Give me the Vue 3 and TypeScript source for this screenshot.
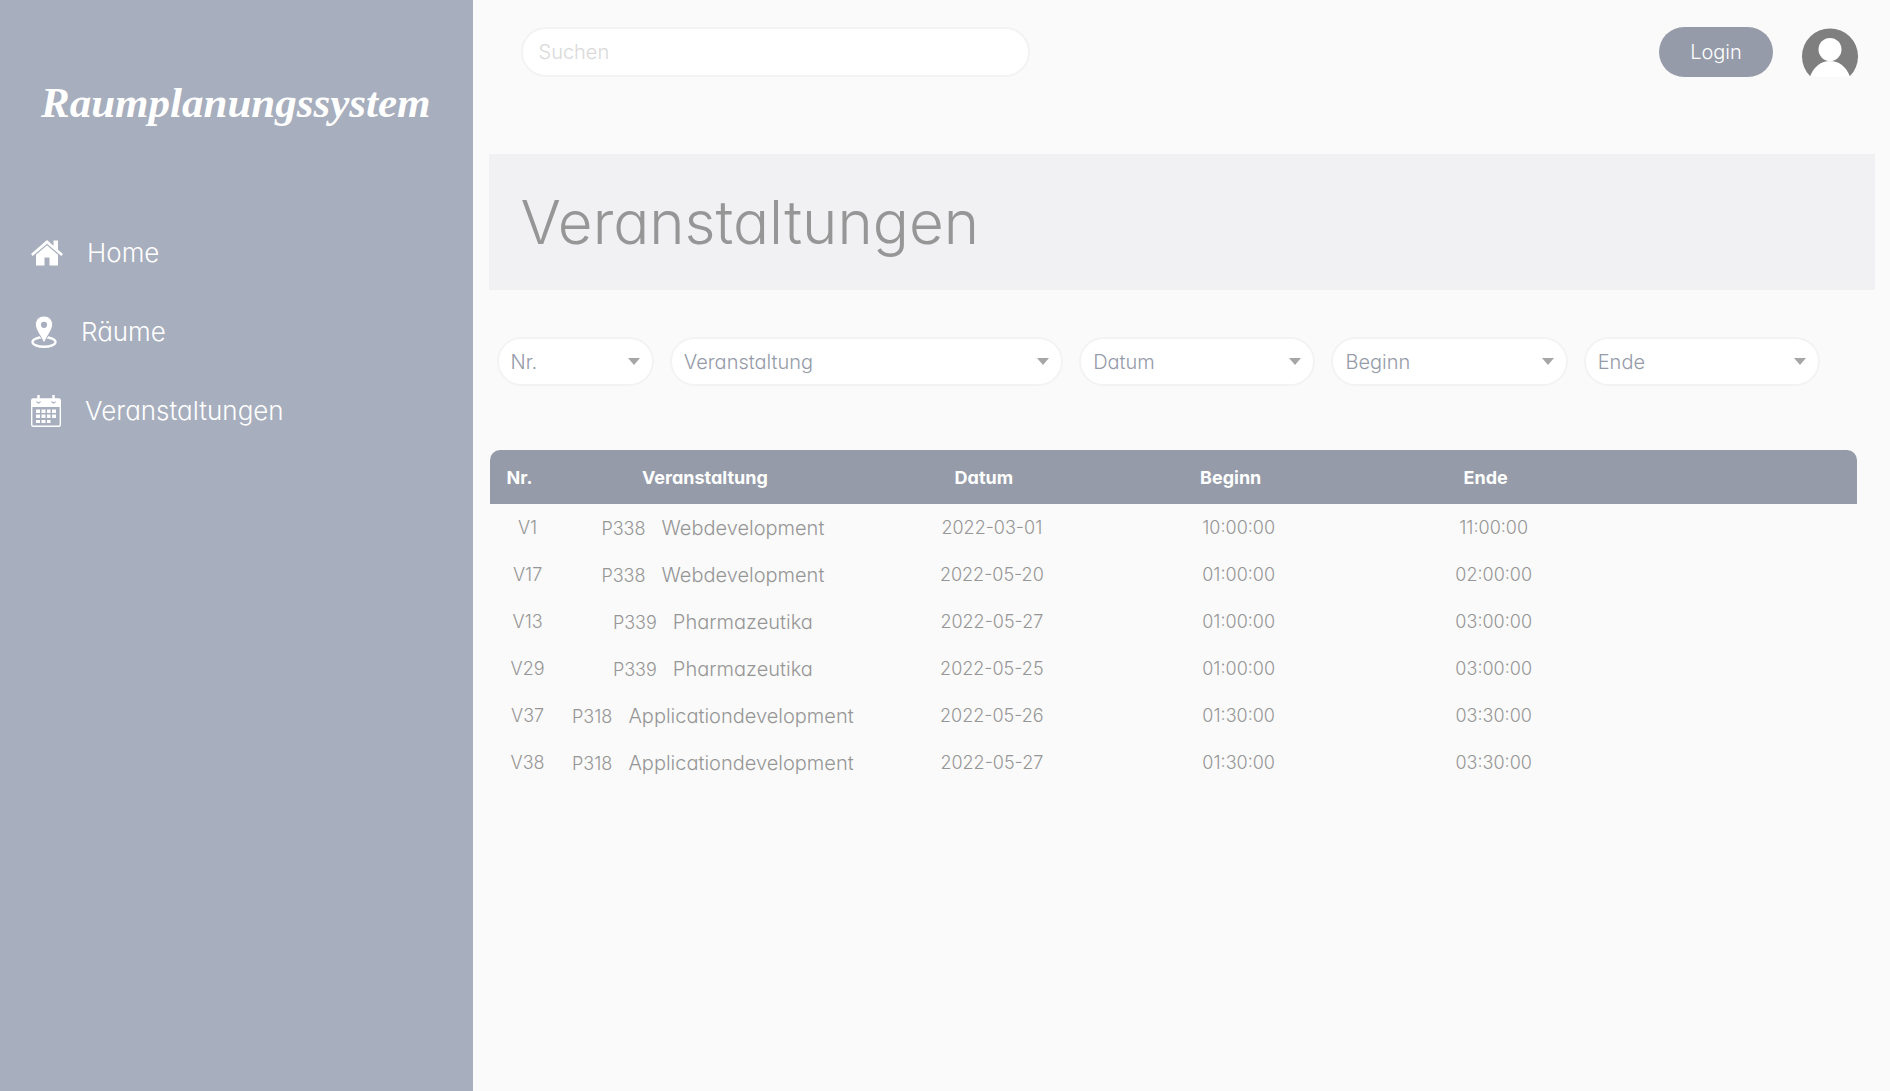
<script setup lang="ts">
import { ref } from 'vue'

interface Filter {
  id: string
  label: string
  share: number
}

interface Booking {
  nr: string
  room: string
  title: string
  date: string
  start: string
  end: string
}

const search = ref('')

const filters: Filter[] = [
  { id: 'nr', label: 'Nr.', share: 157 },
  { id: 'veranstaltung', label: 'Veranstaltung', share: 393 },
  { id: 'datum', label: 'Datum', share: 236 },
  { id: 'beginn', label: 'Beginn', share: 236 },
  { id: 'ende', label: 'Ende', share: 236 },
]

const bookings: Booking[] = [
  { nr: 'V1', room: 'P338', title: 'Webdevelopment', date: '2022-03-01', start: '10:00:00', end: '11:00:00' },
  { nr: 'V17', room: 'P338', title: 'Webdevelopment', date: '2022-05-20', start: '01:00:00', end: '02:00:00' },
  { nr: 'V13', room: 'P339', title: 'Pharmazeutika', date: '2022-05-27', start: '01:00:00', end: '03:00:00' },
  { nr: 'V29', room: 'P339', title: 'Pharmazeutika', date: '2022-05-25', start: '01:00:00', end: '03:00:00' },
  { nr: 'V37', room: 'P318', title: 'Applicationdevelopment', date: '2022-05-26', start: '01:30:00', end: '03:30:00' },
  { nr: 'V38', room: 'P318', title: 'Applicationdevelopment', date: '2022-05-27', start: '01:30:00', end: '03:30:00' },
]
</script>

<template>
  <div class="app">
    <aside class="sidebar">
      <div class="brand">Raumplanungssystem</div>
      <nav class="nav">
        <a href="#home" class="nav-link">
          <svg width="32" height="32" viewBox="0 0 32 32" aria-hidden="true">
            <path d="M16 3 22.500 8.700V3.500H27V12.700L32 17 30.300 19 16 6.700 1.700 19 0 17Z" fill="#fff" />
            <path d="M16 8.300 27 17.700V28.500H18.500V20.500H13.500V28.500H5V17.700Z" fill="#fff" />
          </svg>
          <span>Home</span>
        </a>
        <a href="#raeume" class="nav-link">
          <svg width="26" height="32" viewBox="0 0 26 32" aria-hidden="true">
            <ellipse cx="13" cy="26" rx="11.500" ry="4.800" fill="none" stroke="#fff" stroke-width="2.400" />
            <path d="M13 0C7.800 0 4.400 3.800 4.400 8.600 4.400 14 10 20 13 27.500 16 20 21.600 14 21.600 8.600 21.600 3.800 18.200 0 13 0Z" fill="#fff" stroke="#a7aebd" stroke-width="1" />
            <circle cx="13" cy="8.800" r="3.100" fill="#a7aebd" />
          </svg>
          <span>Räume</span>
        </a>
        <a href="#veranstaltungen" class="nav-link">
          <svg width="30" height="32" viewBox="0 0 30 32" aria-hidden="true">
            <rect x="0.700" y="4" width="28.600" height="27.300" rx="1.500" fill="none" stroke="#fff" stroke-width="1.400" />
            <path d="M1 4H29V12H1Z" fill="#fff" />
            <path d="M5.500 6.500Q7.500 9.500 9.500 6.500M20.500 6.500Q22.500 9.500 24.500 6.500" fill="none" stroke="#a7aebd" stroke-width="1.300" />
            <path d="M7.500 0V6M22.500 0V6" stroke="#fff" stroke-width="2.400" />
            <path d="M5 14.500h4v3.500H5zM10.500 14.500h4v3.500h-4zM16 14.500h3.500v3.500H16zM21 14.500h4v3.500h-4zM5 19.500h4v3.500H5zM10.500 19.500h4v3.500h-4zM16 19.500h3.500v3.500H16zM21 19.500h4v3.500h-4zM5 25h4v3H5zM10.500 25h4v3h-4zM16 25h3.500v3H16z" fill="#fff" />
          </svg>
          <span>Veranstaltungen</span>
        </a>
      </nav>
    </aside>

    <main class="main">
      <header class="topbar">
        <input v-model="search" class="search" type="search" placeholder="Suchen" aria-label="Suchen" />
        <div class="account">
          <button type="button" class="login">Login</button>
          <svg class="avatar" width="56" height="56" viewBox="0 0 56 56" role="img" aria-label="Profil">
            <path d="M8 48A28 28 0 1 1 48 48Z" fill="#7f7f7f" />
            <circle cx="28" cy="21.500" r="11.500" fill="#fff" />
            <path d="M8 48.500C12 38.500 19 33 28 33S44 38.500 48 48.500Z" fill="#fff" />
          </svg>
        </div>
      </header>

      <section class="banner">
        <h1>Veranstaltungen</h1>
      </section>

      <form class="filters" @submit.prevent>
        <div v-for="f in filters" :key="f.id" class="filter" :style="{ flexGrow: f.share }">
          <select :id="f.id" :aria-label="f.label">
            <option>{{ f.label }}</option>
          </select>
          <svg class="caret" width="12" height="7" viewBox="0 0 12 7" aria-hidden="true">
            <path d="M0 0H12L6 7Z" fill="#a6a6a6" />
          </svg>
        </div>
      </form>

      <table class="bookings">
        <colgroup>
          <col class="c-nr" />
          <col class="c-title" />
          <col class="c-date" />
          <col class="c-start" />
          <col class="c-end" />
          <col />
        </colgroup>
        <thead>
          <tr>
            <th scope="col">Nr.</th>
            <th scope="col">Veranstaltung</th>
            <th scope="col">Datum</th>
            <th scope="col">Beginn</th>
            <th scope="col">Ende</th>
            <td></td>
          </tr>
        </thead>
        <tbody>
          <tr v-for="b in bookings" :key="b.nr">
            <td>{{ b.nr }}</td>
            <td><span class="room">{{ b.room }}</span><span class="title">{{ b.title }}</span></td>
            <td>{{ b.date }}</td>
            <td>{{ b.start }}</td>
            <td>{{ b.end }}</td>
            <td></td>
          </tr>
        </tbody>
      </table>
    </main>
  </div>
</template>

<style>
body {
  margin: 0;
  background: #fafafa;
}
</style>

<style scoped>
.app {
  display: flex;
  min-height: 100vh;
  font-family: 'Century Gothic', Inter, 'Liberation Sans', sans-serif;
  font-feature-settings: 'cv11';
  font-size: 20px;
  font-weight: 300;
  color: #969696;
  background: #fafafa;
}

.app * {
  box-sizing: border-box;
}

.sidebar {
  flex: 0 0 25%;
  min-width: 0;
  background: #a7aebd;
  color: #fff;
}

.brand {
  padding: 73px 0 0 41px;
  font-family: 'Brush Script MT', 'Liberation Serif', cursive;
  font-size: 43px;
  font-style: italic;
  font-weight: 700;
  line-height: 60px;
  white-space: nowrap;
}

.nav {
  display: flex;
  flex-direction: column;
  padding: 80px 0 0 31px;
}

.nav-link {
  display: flex;
  align-items: center;
  gap: 24px;
  height: 79px;
  color: #fff;
  font-size: 26px;
  text-decoration: none;
}

.main {
  flex: 1;
  min-width: 0;
}

.topbar {
  display: flex;
  align-items: flex-start;
  justify-content: space-between;
  padding: 27px 32px 0 48px;
}

.search {
  width: 509px;
  height: 50px;
  padding: 0 16px;
  border: 2px solid #f3f3f3;
  border-radius: 25px;
  background: #fff;
  color: #969696;
  font: inherit;
  font-feature-settings: inherit;
  appearance: none;
}

.search::placeholder {
  color: #d9d9d9;
}

.account {
  display: flex;
  gap: 29px;
}

.login {
  width: 114px;
  height: 50px;
  border: 0;
  border-radius: 25px;
  background: #959ba8;
  color: #fff;
  font: inherit;
  font-feature-settings: inherit;
}

.avatar {
  margin-top: 1px;
}

.banner {
  margin: 70px 15px 0 16px;
  padding: 32px;
  background: #f1f1f3;
}

.banner h1 {
  margin: 0;
  font-size: 60px;
  font-weight: 300;
  line-height: 72px;
}

.filters {
  display: flex;
  gap: 16px;
  margin: 47px 70px 0 24px;
}

.filter {
  position: relative;
  flex: 1 1 0;
  min-width: 0;
}

.filter select {
  display: block;
  width: 100%;
  height: 49px;
  padding: 0 32px 0 12px;
  border: 2px solid #f3f3f3;
  border-radius: 25px;
  background: #fff;
  color: #959ba8;
  font: inherit;
  font-feature-settings: inherit;
  appearance: none;
}

.caret {
  position: absolute;
  top: 21px;
  right: 14px;
  pointer-events: none;
}

.bookings {
  width: calc(100% - 50px);
  margin: 64px 33px 0 17px;
  table-layout: fixed;
  border-collapse: separate;
  border-spacing: 0;
  font-size: 18px;
  text-align: center;
  white-space: nowrap;
}

.c-nr {
  width: 4.4%;
}

.c-title {
  width: 22.7%;
}

.c-date {
  width: 18.1%;
}

.c-start {
  width: 18%;
}

.c-end {
  width: 19.3%;
}

thead th,
thead td {
  height: 54px;
  padding: 0;
  background: #959ba8;
  color: #fff;
  font-weight: 700;
}

thead :first-child {
  border-top-left-radius: 10px;
}

thead :last-child {
  border-top-right-radius: 10px;
}

tbody td {
  height: 47px;
  padding: 0 0 0 16px;
}

.room {
  margin-right: 16px;
}

.title {
  font-size: 20px;
}
</style>
